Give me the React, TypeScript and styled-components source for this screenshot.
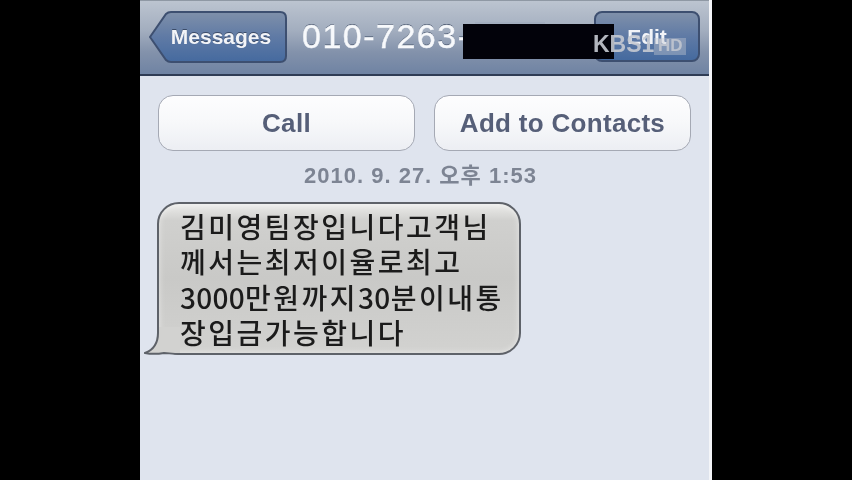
import styled, { createGlobalStyle } from "styled-components";

const GlobalStyle = createGlobalStyle`
  html, body {
    margin: 0;
    padding: 0;
    background: #000;
  }
`;

const Stage = styled.div`
  width: 852px;
  height: 480px;
  background: #000;
  overflow: hidden;
  position: relative;
  padding-left: 140px;
  box-sizing: border-box;
  font-family: "Liberation Sans", "Noto Sans CJK KR", sans-serif;
`;

const Phone = styled.div`
  width: 572px;
  height: 480px;
  box-sizing: border-box;
  background: #dfe4ee;
  border-right: 3px solid #f4f5f8;
  filter: blur(0.6px);
`;

const NavBar = styled.div`
  height: 76px;
  box-sizing: border-box;
  background: linear-gradient(#bcc4d0 0%, #a3aebf 40%, #8392ab 70%, #6f83a3 100%);
  border-top: 1px solid #8f98a4;
  border-bottom: 2px solid #2f3c55;
  display: flex;
  align-items: center;
  padding: 0 9px 2px 9px;
`;

const BackButton = styled.div`
  position: relative;
  width: 138px;
  height: 52px;
  flex-shrink: 0;
  display: flex;
  align-items: center;
  justify-content: center;
  padding-left: 6px;
  box-sizing: border-box;
  color: #f2f4f8;
  font-size: 21px;
  font-weight: 700;
  text-shadow: 0 -1px 0 #3c4c68;
`;

const BackShape = styled.svg`
  position: absolute;
  left: 0;
  top: 0;
`;

const BackLabel = styled.span`
  position: relative;
`;

const Title = styled.div`
  margin-left: 15px;
  width: 292px;
  color: #f7f9fc;
  font-size: 34px;
  letter-spacing: 1.5px;
  white-space: nowrap;
  -webkit-text-stroke: 0.5px #f7f9fc;
  text-shadow: 0 -1px 0 #4a5870;
`;

const EditButton = styled.div`
  width: 106px;
  height: 51px;
  box-sizing: border-box;
  display: flex;
  align-items: center;
  justify-content: center;
  background: linear-gradient(#7f90aa 0%, #5f7aa5 50%, #456a9f 100%);
  border: 2px solid #3d4f70;
  border-radius: 8px;
  color: #f2f4f8;
  font-size: 21px;
  font-weight: 700;
`;

const Content = styled.div`
  padding: 19px 18px 0 18px;
`;

const ActionRow = styled.div`
  display: flex;
  justify-content: space-between;
  width: 533px;
`;

const ActionButton = styled.div`
  width: 257px;
  height: 56px;
  box-sizing: border-box;
  display: flex;
  align-items: center;
  justify-content: center;
  background: linear-gradient(#fdfdfe 0%, #f7f8fa 50%, #eceef3 100%);
  border: 1.5px solid #a5a9b4;
  border-radius: 15px;
  color: #565f78;
  font-size: 26px;
  font-weight: 700;
  letter-spacing: 0.3px;
`;

const DateLine = styled.div`
  margin-top: 11px;
  width: 525px;
  height: 28px;
  line-height: 28px;
  text-align: center;
  color: #7d8493;
  font-size: 22px;
  font-weight: 700;
  letter-spacing: 1px;
`;

const MessageWrap = styled.div`
  position: relative;
  margin: 12px 0 0 -1px;
  width: 364px;
`;

const Bubble = styled.div`
  width: 364px;
  height: 153px;
  box-sizing: border-box;
  padding: 5px 0 0 21px;
  background: linear-gradient(#ececea 0%, #d0d0ce 11%, #c9c9c7 50%, #d2d2d0 100%);
  border: 2px solid #5e6269;
  border-radius: 22px;
  box-shadow: inset 0 0 6px rgba(255, 255, 255, 0.55);
  color: #1b1b1b;
  font-family: "Noto Sans CJK KR", sans-serif;
  font-size: 28px;
  font-weight: 500;
  line-height: 35.3px;
  letter-spacing: 2.5px;
  white-space: nowrap;
`;

const Digits = styled.span`
  letter-spacing: 0.3px;
`;

const Tail = styled.svg`
  position: absolute;
  left: -13px;
  bottom: -2px;
`;

const Redaction = styled.div`
  position: absolute;
  left: 463px;
  top: 24px;
  width: 151px;
  height: 35px;
  background: #02020a;
`;

const RedactionEdge = styled.div`
  position: absolute;
  left: 475px;
  top: 22px;
  width: 70px;
  height: 2px;
  background: #a3aebf;
`;

const Watermark = styled.div`
  position: absolute;
  left: 593px;
  top: 31px;
  display: flex;
  align-items: center;
  color: #c6cad2;
  font-size: 23px;
  font-weight: 700;
  opacity: 0.9;
`;

const HdBadge = styled.span`
  width: 32px;
  height: 17px;
  box-sizing: border-box;
  margin-top: 3px;
  display: flex;
  align-items: center;
  justify-content: center;
  background: rgba(198, 202, 210, 0.45);
  font-size: 17px;
`;

export default function App() {
  return (
    <Stage>
      <GlobalStyle />
      <Phone>
        <NavBar>
          <BackButton>
            <BackShape width="138" height="52" viewBox="0 0 138 52">
              <defs>
                <linearGradient id="backFill" x1="0" y1="0" x2="0" y2="1">
                  <stop offset="0" stopColor="#7f90aa" />
                  <stop offset="0.5" stopColor="#5f7aa5" />
                  <stop offset="1" stopColor="#456a9f" />
                </linearGradient>
              </defs>
              <path
                d="M1 26 L17 3 Q19 1 22 1 H131 Q137 1 137 7 V45 Q137 51 131 51 H22 Q19 51 17 49 Z"
                fill="url(#backFill)"
                stroke="#3d4f70"
                strokeWidth="2"
              />
            </BackShape>
            <BackLabel>Messages</BackLabel>
          </BackButton>
          <Title>010-7263-</Title>
          <EditButton>Edit</EditButton>
        </NavBar>
        <Content>
          <ActionRow>
            <ActionButton>Call</ActionButton>
            <ActionButton>Add to Contacts</ActionButton>
          </ActionRow>
          <DateLine>2010. 9. 27. 오후 1:53</DateLine>
          <MessageWrap>
            <Bubble>
              김미영팀장입니다고객님
              <br />
              께서는최저이율로최고
              <br />
              <Digits>3000</Digits>만원까지<Digits>30</Digits>분이내통
              <br />
              장입금가능합니다
            </Bubble>
            <Tail width="36" height="30" viewBox="0 0 36 30">
              <path d="M13 0 L13 6 C13 16 9 23 1 26 C6 27 14 27 20 26 C24 26 28 27 36 27 L36 0 Z" fill="#d2d2d0" />
              <path
                d="M14 0 L14 6 C14 16 9 23 1 26 C6 27 14 27 20 26 C24 26 28 27 36 27"
                fill="none"
                stroke="#5e6269"
                strokeWidth="2"
              />
            </Tail>
          </MessageWrap>
        </Content>
      </Phone>
      <RedactionEdge />
      <Redaction />
      <Watermark>
        KBS1<HdBadge>HD</HdBadge>
      </Watermark>
    </Stage>
  );
}
